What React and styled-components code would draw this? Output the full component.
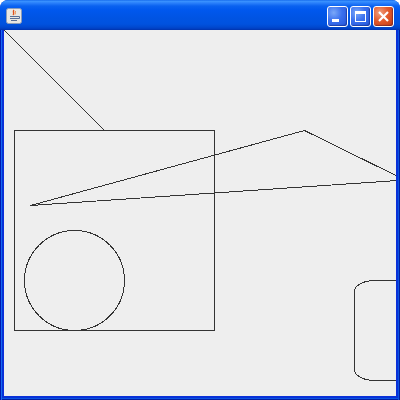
import React from 'react';
import styled, { createGlobalStyle } from 'styled-components';

const GlobalStyle = createGlobalStyle`
  html, body {
    margin: 0;
    padding: 0;
    background: #ffffff;
  }
`;

const Window = styled.div`
  width: 400px;
  height: 400px;
  display: flex;
  flex-direction: column;
  background: #0842d6;
  border-radius: 8px 8px 0 0;
  overflow: hidden;
  font-family: "Liberation Sans", Arial, sans-serif;
`;

const TitleBar = styled.div`
  height: 30px;
  flex: 0 0 30px;
  display: flex;
  align-items: center;
  padding: 0 6px 0 6px;
  box-sizing: border-box;
  background: linear-gradient(
    to bottom,
    #0a5fe8 0px,
    #3d95ff 1px,
    #2a80fb 3px,
    #0a62f0 6px,
    #0058ee 10px,
    #0054e3 18px,
    #0052df 24px,
    #0049d0 27px,
    #003dc0 29px,
    #0031a8 30px
  );
`;

const AppIcon = styled.div`
  width: 16px;
  height: 16px;
  display: flex;
  margin-top: 1px;
`;

const Spacer = styled.div`
  flex: 1;
`;

const Buttons = styled.div`
  display: flex;
  gap: 2px;
  margin-top: 3px;
`;

const CaptionButton = styled.div`
  width: 21px;
  height: 21px;
  box-sizing: border-box;
  border: 1px solid #ffffff;
  border-radius: 3px;
  display: flex;
  align-items: center;
  justify-content: center;
  background: ${(p) =>
    p.$close
      ? 'radial-gradient(circle at 30% 30%, #f0a080 0%, #e35a2c 45%, #c33a12 100%)'
      : 'radial-gradient(circle at 30% 30%, #7aa8f8 0%, #3a70ee 45%, #2454d8 100%)'};
  box-shadow: inset -1px -1px 1px rgba(0, 0, 60, 0.35);
`;

const Frame = styled.div`
  flex: 1;
  display: flex;
  padding: 0 4px 4px 4px;
  background: #0831d9;
  box-shadow: inset 1px 0 0 #0019b0, inset 2px 0 0 #166aee, inset -1px 0 0 #001ea0,
    inset -2px 0 0 #0b55e0, inset 0 -1px 0 #001ea0, inset 0 -2px 0 #0b55e0;
`;

const Canvas = styled.div`
  flex: 1;
  background: #eeeeee;
  overflow: hidden;
  display: flex;
`;

const JavaIcon = () => (
  <svg width="16" height="16" viewBox="0 0 16 16">
    <rect x="0.5" y="0.5" width="15" height="15" rx="2" fill="#e9e7e2" stroke="#8c9cb8" />
    <path d="M8 2 C6 4 9 5 7 7" stroke="#e0501a" strokeWidth="1.3" fill="none" />
    <path d="M9.5 3 C8.5 4.5 10 5 9 6.5" stroke="#f08030" strokeWidth="1" fill="none" />
    <rect x="4" y="8" width="8" height="1" fill="#5a6e94" />
    <rect x="4" y="10" width="8" height="1" fill="#5a6e94" />
    <rect x="5" y="12" width="6" height="1" fill="#5a6e94" />
    <path d="M12 8.5 h1.5 v2 h-1.5" stroke="#5a6e94" fill="none" />
  </svg>
);

const App = () => (
  <>
    <GlobalStyle />
    <Window>
      <TitleBar>
        <AppIcon>
          <JavaIcon />
        </AppIcon>
        <Spacer />
        <Buttons>
          <CaptionButton>
            <svg width="19" height="19" viewBox="0 0 19 19">
              <rect x="4" y="12" width="7" height="3" fill="#ffffff" />
            </svg>
          </CaptionButton>
          <CaptionButton>
            <svg width="19" height="19" viewBox="0 0 19 19">
              <rect x="4.5" y="4.5" width="10" height="10" fill="none" stroke="#ffffff" />
              <rect x="4" y="4" width="11" height="3" fill="#ffffff" />
            </svg>
          </CaptionButton>
          <CaptionButton $close>
            <svg width="19" height="19" viewBox="0 0 19 19">
              <path d="M5 5 L14 14 M14 5 L5 14" stroke="#ffffff" strokeWidth="2.2" />
            </svg>
          </CaptionButton>
        </Buttons>
      </TitleBar>
      <Frame>
        <Canvas>
          <svg width="392" height="366" viewBox="0 0 392 366" shapeRendering="crispEdges">
            <g fill="none" stroke="#333333" strokeWidth="1">
              <line x1="0.5" y1="0.5" x2="100.5" y2="100.5" />
              <rect x="10.5" y="100.5" width="200" height="200" />
              <ellipse cx="70.5" cy="250.5" rx="50" ry="50" />
              <polygon points="26.5,175.5 300.5,100.5 401,150 " />
              <rect x="350.5" y="250.5" width="100" height="100" rx="20" ry="11" />
            </g>
          </svg>
        </Canvas>
      </Frame>
    </Window>
  </>
);

export default App;
